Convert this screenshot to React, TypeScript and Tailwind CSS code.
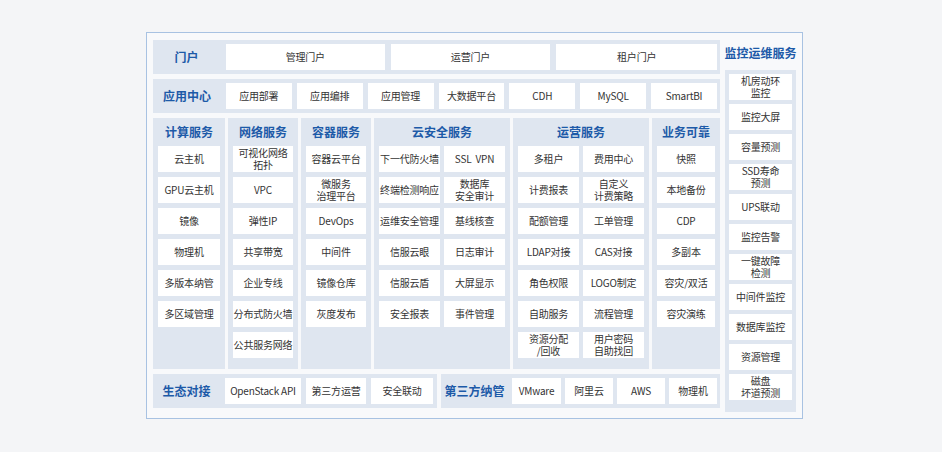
const F = { fontFamily: '"Noto Sans CJK SC", "Noto Sans", sans-serif' };

function Box({ t, w }: { t: string; w?: string }) {
  return (
    <div className={`${w ?? "w-full"} h-[26px] bg-white flex items-center justify-center text-center text-[10px] leading-[12px] tracking-[-0.2px] text-[#333] whitespace-pre overflow-visible`}>
      {t}
    </div>
  );
}

function Col({ title, w, items, two }: { title: string; w: string; items: string[]; two?: boolean }) {
  return (
    <div className={`${w} bg-[#dfe6f0] flex flex-col px-[5px]`}>
      <div className="h-[28px] flex items-center justify-center text-[12px] font-bold text-[#1d5aa8]">{title}</div>
      <div className={two ? "grid grid-cols-2 gap-x-[4px] gap-y-[5px]" : "flex flex-col gap-[5px]"}>
        {items.map((t, i) => (
          <Box key={i} t={t} />
        ))}
      </div>
    </div>
  );
}

export default function App() {
  return (
    <div className="w-[942px] h-[452px] bg-[#f4f5f7] pt-[32px] pl-[146px]" style={F}>
      <div className="w-[657px] h-[387px] border border-[#a8c2e2] bg-[#f8f9fb] flex gap-[5px] pl-[6px] pt-[7px]">
        <div className="w-[567px] flex flex-col gap-[5px]">
          <div className="h-[34px] bg-[#dfe6f0] flex items-center gap-[6px] pr-[3px]">
            <div className="w-[67px] text-center text-[12px] font-bold text-[#1d5aa8]">门户</div>
            <Box t="管理门户" w="w-[159px]" />
            <Box t="运营门户" w="w-[160px]" />
            <Box t="租户门户" w="w-[161px]" />
          </div>
          <div className="h-[34px] bg-[#dfe6f0] flex items-center gap-[5px] pr-[3px]">
            <div className="w-[68px] text-center text-[12px] font-bold text-[#1d5aa8]">应用中心</div>
            {["应用部署", "应用编排", "应用管理", "大数据平台", "CDH", "MySQL", "SmartBI"].map((t) => (
              <Box key={t} t={t} w="w-[66px]" />
            ))}
          </div>
          <div className="h-[251px] flex gap-[3px]">
            <Col title="计算服务" w="w-[72px]" items={["云主机", "GPU云主机", "镜像", "物理机", "多版本纳管", "多区域管理"]} />
            <Col title="网络服务" w="w-[70px]" items={["可视化网络\n拓扑", "VPC", "弹性IP", "共享带宽", "企业专线", "分布式防火墙", "公共服务网络"]} />
            <Col title="容器服务" w="w-[70px]" items={["容器云平台", "微服务\n治理平台", "DevOps", "中间件", "镜像仓库", "灰度发布"]} />
            <Col title="云安全服务" w="w-[136px]" two items={["下一代防火墙", "SSL  VPN", "终端检测响应", "数据库\n安全审计", "运维安全管理", "基线核查", "信服云眼", "日志审计", "信服云盾", "大屏显示", "安全报表", "事件管理"]} />
            <Col title="运营服务" w="w-[136px]" two items={["多租户", "费用中心", "计费报表", "自定义\n计费策略", "配额管理", "工单管理", "LDAP对接", "CAS对接", "角色权限", "LOGO制定", "自助服务", "流程管理", "资源分配\n/回收", "用户密码\n自助找回"]} />
            <Col title="业务可靠" w="w-[68px]" items={["快照", "本地备份", "CDP", "多副本", "容灾/双活", "容灾演练"]} />
          </div>
          <div className="h-[34px] flex gap-[4px]">
            <div className="w-[284px] bg-[#dfe6f0] flex items-center gap-[5px] pr-[4px]">
              <div className="w-[67px] text-center text-[12px] font-bold text-[#1d5aa8]">生态对接</div>
              <Box t="OpenStack API" w="w-[76px]" />
              <Box t="第三方运营" w="w-[60px]" />
              <Box t="安全联动" w="w-[62px]" />
            </div>
            <div className="w-[279px] bg-[#dfe6f0] flex items-center gap-[4px] pr-[3px]">
              <div className="w-[67px] text-center text-[12px] font-bold text-[#1d5aa8]">第三方纳管</div>
              <Box t="VMware" w="w-[49px]" />
              <Box t="阿里云" w="w-[48px]" />
              <Box t="AWS" w="w-[48px]" />
              <Box t="物理机" w="w-[48px]" />
            </div>
          </div>
        </div>
        <div className="w-[71px] flex flex-col gap-[4px]">
          <div className="h-[26px] flex items-center justify-center text-[12px] font-bold text-[#1d5aa8] whitespace-nowrap">监控运维服务</div>
          <div className="h-[342px] bg-[#dfe6f0] flex flex-col gap-[4px] px-[4px] py-[4px]">
            {["机房动环\n监控", "监控大屏", "容量预测", "SSD寿命\n预测", "UPS联动", "监控告警", "一键故障\n检测", "中间件监控", "数据库监控", "资源管理", "磁盘\n坏道预测"].map((t) => (
              <Box key={t} t={t} />
            ))}
          </div>
        </div>
      </div>
    </div>
  );
}
